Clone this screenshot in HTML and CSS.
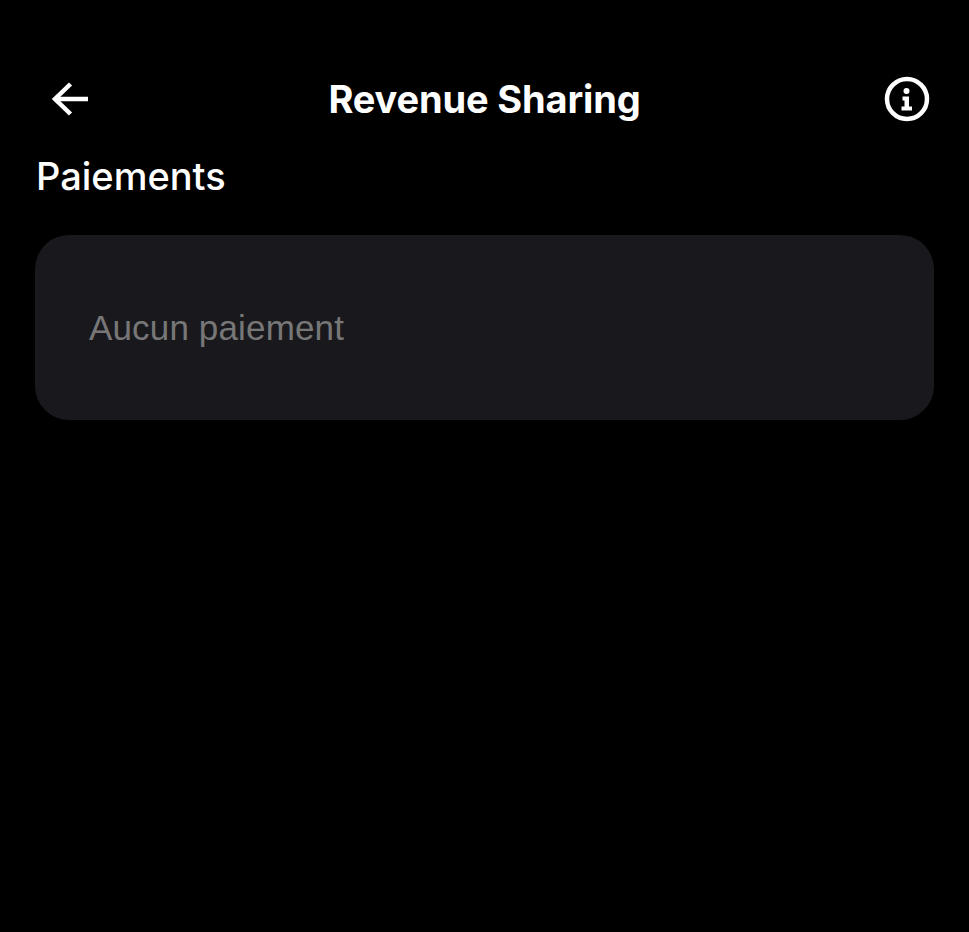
FILE: index.html
```html
<!DOCTYPE html>
<html lang="fr">
<head>
  <meta charset="UTF-8" />
  <title>Revenue Sharing</title>
  <link rel="stylesheet" href="styles.css">
</head>
<body>

<!-- header -->
  <header class="header">
    <button class="icon-btn back">
      <svg width="38" height="34" viewBox="0 0 38 34" fill="none" stroke="#fff" stroke-width="4.500"><path d="M37 17H4"/><path d="M19.500 2 4 17l15.500 15"/></svg>
    </button>
    <h1 class="title">Revenue Sharing</h1>
    <button class="icon-btn info">
      <svg width="46" height="46" viewBox="0 0 46 46"><circle cx="23" cy="23" r="20" fill="none" stroke="#fff" stroke-width="4.500"/><circle cx="22.500" cy="15" r="3" fill="#fff"/><path d="M18.500 20.500h6.500v10h3v4h-10.500v-4h3v-6h-2z" fill="#fff"/></svg>
    </button>
  </header>

  <main class="content">
    <h2 class="section-title">Paiements</h2>
    <div class="card">
      <p class="empty">Aucun paiement</p>
    </div>
  </main>

</body>
</html>
```

FILE: styles.css
```css
* {
  margin: 0;
  padding: 0;
  box-sizing: border-box;
}

body {
  font-family: Inter, 'Liberation Sans', sans-serif;
  background: #000;
  color: #fff;
  height: 932px;
  overflow: hidden;
}

.header {
  display: grid;
  grid-template-columns: 1fr auto 1fr;
  align-items: center;
  height: 46px;
  margin-top: 76px;
  padding: 0 39px;
}

.icon-btn {
  display: flex;
  background: none;
  border: none;
}

.back {
  justify-self: start;
  padding-left: 12px;
}

.info {
  justify-self: end;
}

.title {
  font-size: 38px;
  font-weight: 650;
  letter-spacing: -0.15px;
}

.content {
  padding: 0 35px;
}

.section-title {
  font-size: 38px;
  font-weight: 500;
  margin-top: 31px;
  line-height: 46px;
  padding-left: 1px;
}

.card {
  display: flex;
  align-items: center;
  height: 185px;
  margin-top: 36px;
  padding: 0 54px;
  background: #19191d;
  border-radius: 34px;
}

.empty {
  font-family: 'Liberation Sans', sans-serif;
  font-size: 35px;
  letter-spacing: 0.15px;
  color: #777;
}
```
